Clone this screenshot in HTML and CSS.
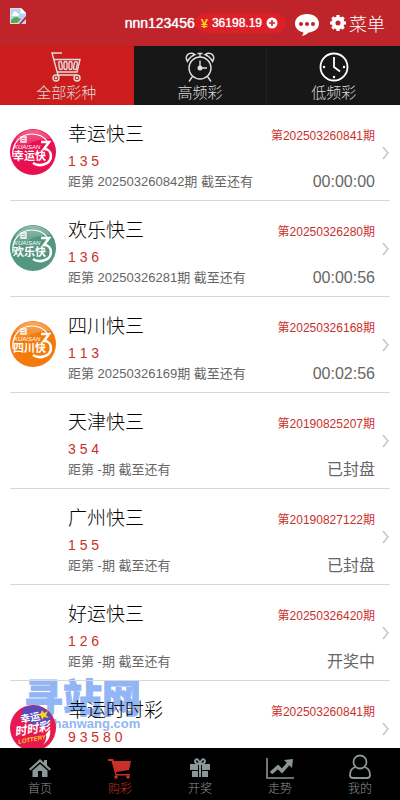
FILE: index.html
```html
<!DOCTYPE html>
<html lang="zh-CN">
<head>
    <meta charset="UTF-8">
    <meta name="viewport" content="width=device-width, initial-scale=1.0">
    <title>购彩</title>
    <link rel="stylesheet" href="styles.css">
</head>
<body>
    <header class="header">
        <a href="#" class="logo" aria-label="首页">
            <svg width="16" height="16" viewBox="0 0 16 16">
                <path d="M0 0h11l5 5v5L10 16H0z" fill="#d5e2f5"/>
                <path d="M1 1h9v5h5v4l-5 5H1z" fill="#b9d3f7"/>
                <path d="M11 0v5h5z" fill="#fff"/>
                <path d="M3 6a2 2 0 0 1 4-1 1.500 1.500 0 0 1 1 3H3a1 1 0 0 1 0-2" fill="#fff"/>
                <path d="M1 15v-3q4-5 8-2l2 1-4 4z" fill="#58a846"/>
                <path d="M9 16l7-8v8z" fill="#c2242c"/>
                <path d="M11 16l5-5v5z" fill="#c9d4e8"/>
            </svg>
        </a>
        <div class="user">
            <span class="user-name">nnn123456</span>
            <a href="#" class="balance">
                <span class="yen">¥</span>
                <span>36198.19</span>
                <svg width="12" height="12" viewBox="0 0 12 12"><circle cx="6" cy="6" r="5.500" fill="#fff"/><path d="M6 3v6M3 6h6" stroke="#d9202a" stroke-width="1.600"/></svg>
            </a>
        </div>
        <a href="#" class="chat" aria-label="客服">
            <svg width="26" height="24" viewBox="0 0 26 24">
                <path d="M13 1C6 1 1 5 1 10.500c0 4.500 3.500 8 8.500 9-.2 1.500-.8 2.500-2 3.500 3-.5 5.500-1.500 7-3.500 6-.5 10.500-4 10.500-9C25 5 20 1 13 1z" fill="#fff"/>
                <g fill="#c0242b"><circle cx="7" cy="11" r="2"/><circle cx="13" cy="11" r="2"/><circle cx="19" cy="11" r="2"/></g>
            </svg>
        </a>
        <button type="button" class="menu">
            <svg width="16" height="16" viewBox="0 0 16 16">
                <circle cx="8" cy="8" r="4.500" fill="none" stroke="#fff" stroke-width="4"/>
                <path d="M8 0v4M8 12v4M0 8h4M12 8h4M2.300 2.300l3 3M10.700 10.700l3 3M13.700 2.300l-3 3M5.300 10.700l-3 3" stroke="#fff" stroke-width="3.200"/>
            </svg>
            菜单
        </button>
    </header>

    <nav class="tabs">
        <a href="#" class="tab active">
            <svg width="30" height="30" viewBox="0 0 30 30" fill="none" stroke="currentColor" stroke-width="1.400">
                <path d="M11 1H1l6 22h18M3.500 7.500H29l-3 12.500H6.500"/>
                <rect x="8" y="9.500" width="3" height="8" rx="1.500" transform="rotate(-7 9 13)"/>
                <rect x="13" y="9.500" width="3" height="8" rx="1.500"/>
                <rect x="18" y="9.500" width="3" height="8" rx="1.500"/>
                <rect x="23" y="9.500" width="3" height="8" rx="1.500" transform="rotate(10 24 13)"/>
                <circle cx="5" cy="26" r="3"/><circle cx="26" cy="26" r="3"/>
                <circle cx="5" cy="26" r=".6"/><circle cx="26" cy="26" r=".6"/>
            </svg>
            全部彩种
        </a>
        <a href="#" class="tab">
            <svg width="30" height="30" viewBox="0 0 30 30" fill="none" stroke="currentColor" stroke-width="1.400">
                <circle cx="15" cy="16" r="11"/>
                <path d="M2.500 9.500C-1 4 4-1 10 2.500q-5 2-7.500 7zM27.500 9.500C31 4 26-1 20 2.500q5 2 7.500 7z"/>
                <path d="M7.500 24.500L4 29.500M22.500 24.500l3.500 5M15 8.500V16h7M15 1.500V5M12.500 1.500h5"/>
                <circle cx="15" cy="16" r="1.800" fill="currentColor"/>
            </svg>
            高频彩
        </a>
        <a href="#" class="tab">
            <svg width="30" height="30" viewBox="0 0 30 30" fill="none" stroke="#fff" stroke-width="1.800">
                <circle cx="15" cy="15" r="13.500"/>
                <path d="M15 5v10l6 4.500"/>
                <g fill="#fff" stroke="none"><circle cx="5" cy="15" r="1.200"/><circle cx="25" cy="15" r="1.200"/><circle cx="15" cy="25" r="1.200"/></g>
            </svg>
            低频彩
        </a>
    </nav>

    <!-- 公用图形 -->
    <svg class="defs" width="0" height="0">
        <defs>
            <linearGradient id="shine" x1="0" y1="0" x2="0" y2="1">
                <stop offset="0" stop-color="#fff" stop-opacity=".35"/>
                <stop offset="1" stop-color="#fff" stop-opacity="0"/>
            </linearGradient>
            <symbol id="k3" viewBox="0 0 46 46">
                <circle cx="23" cy="23" r="23" fill="currentColor"/>
                <path d="M5 10A22 22 0 0 1 41 10Q20 9 9 24z" fill="url(#shine)"/>
                <path d="M3 28C1 15 10 5 22 5c7 0 12 3 15 7" fill="none" stroke="#fff" stroke-width="1.200"/>
                <path d="M11 8h5v5h-5zM12 10.500h3" fill="none" stroke="#fff" stroke-width="1.300"/>
                <path d="M31 13h8l-5 7c9 0 9 13 1 15-5 2-9 1-12-1" fill="none" stroke="#fff" stroke-width="2.600"/>
                <text x="4" y="20" class="logo-en">KUAISAN</text>
            </symbol>
            <symbol id="arrow" viewBox="0 0 8 14">
                <path d="M1 1l5 6-5 6" fill="none" stroke="#c8c8c8" stroke-width="1.600"/>
            </symbol>
        </defs>
    </svg>

    <main class="list">
        <a href="#" class="item">
            <svg class="pic pink" viewBox="0 0 46 46"><use href="#k3"/><text x="3" y="31" class="logo-cn">幸运快</text></svg>
            <div class="info">
                <div class="row"><h2>幸运快三</h2><span class="issue">第202503260841期</span></div>
                <p class="nums">1 3 5</p>
                <div class="row"><span class="next">距第 202503260842期 截至还有</span><span class="time">00:00:00</span></div>
            </div>
            <svg class="arrow"><use href="#arrow"/></svg>
        </a>
        <a href="#" class="item">
            <svg class="pic green" viewBox="0 0 46 46"><use href="#k3"/><text x="3" y="31" class="logo-cn">欢乐快</text></svg>
            <div class="info">
                <div class="row"><h2>欢乐快三</h2><span class="issue">第20250326280期</span></div>
                <p class="nums">1 3 6</p>
                <div class="row"><span class="next">距第 20250326281期 截至还有</span><span class="time">00:00:56</span></div>
            </div>
            <svg class="arrow"><use href="#arrow"/></svg>
        </a>
        <a href="#" class="item">
            <svg class="pic orange" viewBox="0 0 46 46"><use href="#k3"/><text x="3" y="31" class="logo-cn">四川快</text></svg>
            <div class="info">
                <div class="row"><h2>四川快三</h2><span class="issue">第20250326168期</span></div>
                <p class="nums">1 1 3</p>
                <div class="row"><span class="next">距第 20250326169期 截至还有</span><span class="time">00:02:56</span></div>
            </div>
            <svg class="arrow"><use href="#arrow"/></svg>
        </a>
        <a href="#" class="item">
            <div class="pic"></div>
            <div class="info">
                <div class="row"><h2>天津快三</h2><span class="issue">第20190825207期</span></div>
                <p class="nums">3 5 4</p>
                <div class="row"><span class="next">距第 -期 截至还有</span><span class="time">已封盘</span></div>
            </div>
            <svg class="arrow"><use href="#arrow"/></svg>
        </a>
        <a href="#" class="item">
            <div class="pic"></div>
            <div class="info">
                <div class="row"><h2>广州快三</h2><span class="issue">第20190827122期</span></div>
                <p class="nums">1 5 5</p>
                <div class="row"><span class="next">距第 -期 截至还有</span><span class="time">已封盘</span></div>
            </div>
            <svg class="arrow"><use href="#arrow"/></svg>
        </a>
        <a href="#" class="item">
            <div class="pic"></div>
            <div class="info">
                <div class="row"><h2>好运快三</h2><span class="issue">第20250326420期</span></div>
                <p class="nums">1 2 6</p>
                <div class="row"><span class="next">距第 -期 截至还有</span><span class="time">开奖中</span></div>
            </div>
            <svg class="arrow"><use href="#arrow"/></svg>
        </a>
        <a href="#" class="item">
            <svg class="pic" viewBox="0 0 46 46">
                <circle cx="23" cy="23" r="23" fill="#e8194f"/>
                <path d="M13 3Q24-2 35 4l7 7-5 11-12-2-14-6z" fill="#5a4bb8"/>
                <path d="M32 5l2 3 4-2-2 4 3 3-5-1-2 3-1-4-3-1 3-2z" fill="#ffd21e"/>
                <g transform="rotate(-10 23 23)">
                    <text x="12" y="16" class="lot-cn">幸运</text>
                    <text x="4" y="28" class="lot-big">时时彩</text>
                    <text x="6" y="36" class="lot-en">LOTTERY</text>
                </g>
                <path d="M40 24q2 9-7 16 4-5 3-11z" fill="#fff"/>
            </svg>
            <div class="info">
                <div class="row"><h2>幸运时时彩</h2><span class="issue">第202503260841期</span></div>
                <p class="nums">9 3 5 8 0</p>
            </div>
            <svg class="arrow"><use href="#arrow"/></svg>
        </a>
    </main>

    <div class="watermark">
        <div class="mark-cn">寻站网</div>
        <div class="mark-en">xunzhanwang.com</div>
    </div>

    <footer class="footer">
        <a href="#">
            <svg width="24" height="24" viewBox="0 0 24 24" fill="currentColor"><path d="M12 3L1 13l1.500 1.500L12 6l9.500 8.500L23 13l-4-3.700V4h-3v2.600z"/><path d="M12 8l-7.500 6.500V21H10v-6h4v6h5.500v-6.500z"/></svg>
            首页
        </a>
        <a href="#" class="active">
            <svg width="24" height="24" viewBox="0 0 24 24" fill="currentColor"><path d="M0 3h5l1 2h17l-2 9-13 2 .5 2H22v1.500H7.500L3.500 5H0z"/><circle cx="8" cy="21" r="1.800"/><circle cx="20" cy="21" r="1.800"/></svg>
            购彩
        </a>
        <a href="#">
            <svg width="24" height="24" viewBox="0 0 24 24"><path d="M2 8h8v6H2zM14 8h8v6h-8zM4 15h6v6H4zM14 15h6v6h-6zM11 8h2v13h-2z" fill="currentColor"/><path d="M12 8C8 8 6 6 7.500 4 9 2 11 4 12 8c1-4 3-6 4.500-4C18 6 16 8 12 8z" fill="none" stroke="currentColor" stroke-width="2"/></svg>
            开奖
        </a>
        <a href="#">
            <svg width="28" height="24" viewBox="0 0 28 24"><path d="M1 2v20h27" fill="none" stroke="currentColor" stroke-width="1.600"/><path d="M5 17l7-6 4 4 7-8" fill="none" stroke="currentColor" stroke-width="3.500"/><path d="M18 4l9-1-1 9z" fill="currentColor"/></svg>
            走势
        </a>
        <a href="#">
            <svg width="24" height="26" viewBox="0 0 24 26" fill="none" stroke="currentColor" stroke-width="1.800"><circle cx="12" cy="8" r="6.500"/><path d="M7.500 13C4 14 2 17 2 21q0 3 3 3h14q3 0 3-3c0-4-2-7-5.500-8"/></svg>
            我的
        </a>
    </footer>
</body>
</html>
```
FILE: styles.css
```css
* {
    box-sizing: border-box;
}

body {
    margin: 0;
    height: 100vh;
    display: flex;
    flex-direction: column;
    overflow: hidden;
    background: #fff;
    font-family: "Liberation Sans", "Noto Sans CJK SC", sans-serif;
}

a {
    color: inherit;
    text-decoration: none;
}

.header {
    flex: none;
    height: 46px;
    display: flex;
    align-items: center;
    padding: 0 15px 0 10px;
    background: #c0242b;
    color: #fff;
}

.logo {
    align-self: flex-start;
    margin-top: 8px;
    line-height: 0;
}

.user {
    margin-left: auto;
    display: flex;
    align-items: center;
    text-shadow: 0 0 1px #fff;
}

.user-name {
    font-size: 14px;
}

.balance {
    height: 20px;
    display: flex;
    align-items: center;
    gap: 4px;
    padding: 0 8px 0 6px;
    border-radius: 10px;
    background: #dd1f28;
    font-size: 12px;
}

.yen {
    color: #ffd21e;
    font-size: 13px;
    font-weight: bold;
    text-shadow: none;
}

.chat {
    margin: 3px 10px 0 8px;
    line-height: 0;
}

.menu {
    display: flex;
    align-items: center;
    gap: 3px;
    padding: 0;
    border: none;
    background: none;
    color: #fff;
    font: 300 18px "Liberation Sans", "Noto Sans CJK SC", sans-serif;
}

.tabs {
    flex: none;
    display: flex;
    height: 59px;
    background: #171718;
    color: #ddd;
}

.tab {
    flex: 1;
    display: flex;
    flex-direction: column;
    align-items: center;
    padding-top: 6px;
    border-right: 1px solid #222224;
    font-size: 15px;
    font-weight: 300;
    line-height: 22px;
}

.tab:last-child {
    border-right: none;
}

.tab.active {
    background: #cc1c1c;
    border-color: #cc1c1c;
}

.defs {
    position: absolute;
}

.list {
    flex: 1;
    min-height: 0;
    overflow: hidden;
    padding: 0 10px;
}

.item {
    display: flex;
    height: 96px;
    border-bottom: 1px solid #d8d8d8;
}

.pic {
    flex: none;
    width: 46px;
    height: 46px;
    margin: 24px 12px 0 0;
}

.pink {
    color: #e8104f;
}

.green {
    color: #539780;
}

.orange {
    color: #f47a0c;
}

.logo-en {
    fill: #fff;
    font-size: 6px;
    font-style: italic;
}

.logo-cn {
    fill: #fff;
    font-size: 11px;
    font-weight: bold;
}

.lot-cn {
    fill: #fff;
    font-size: 10px;
    font-weight: bold;
}

.lot-big {
    fill: #fff;
    font-size: 12px;
    font-weight: bold;
    font-style: italic;
}

.lot-en {
    fill: #ffd21e;
    font-size: 6px;
    font-weight: bold;
    font-style: italic;
}

.info {
    flex: 1;
    margin-right: 7px;
    padding-top: 16px;
}

.row {
    display: flex;
    justify-content: space-between;
    align-items: center;
}

.row h2 {
    margin: 0;
    color: #000;
    font-size: 19px;
    font-weight: 300;
    line-height: 28px;
}

.issue {
    padding-bottom: 2px;
    color: #c9302c;
    font-size: 12px;
}

.nums {
    margin: 0;
    color: #c9302c;
    font-size: 14px;
    line-height: 24px;
}

.next {
    color: #666;
    font-size: 13px;
    line-height: 18px;
}

.time {
    color: #666;
    font-size: 16px;
    line-height: 18px;
}

.arrow {
    flex: none;
    align-self: center;
    width: 8px;
    height: 14px;
}

.watermark {
    position: absolute;
    z-index: -1;
    left: 24px;
    bottom: 68px;
    color: #92b6f5;
    font-weight: 900;
}

.mark-cn {
    font-size: 39px;
    line-height: 34px;
    -webkit-text-stroke: 1px #92b6f5;
}

.mark-en {
    font-size: 13px;
    line-height: 16px;
}

.footer {
    flex: none;
    height: 52px;
    display: flex;
    background: #000;
    color: #8b9696;
}

.footer a {
    flex: 1;
    display: flex;
    flex-direction: column;
    align-items: center;
    justify-content: flex-end;
    padding-bottom: 2px;
    font-size: 12px;
    font-weight: 300;
    line-height: 18px;
}

.footer .active {
    color: #c9302c;
}
```
